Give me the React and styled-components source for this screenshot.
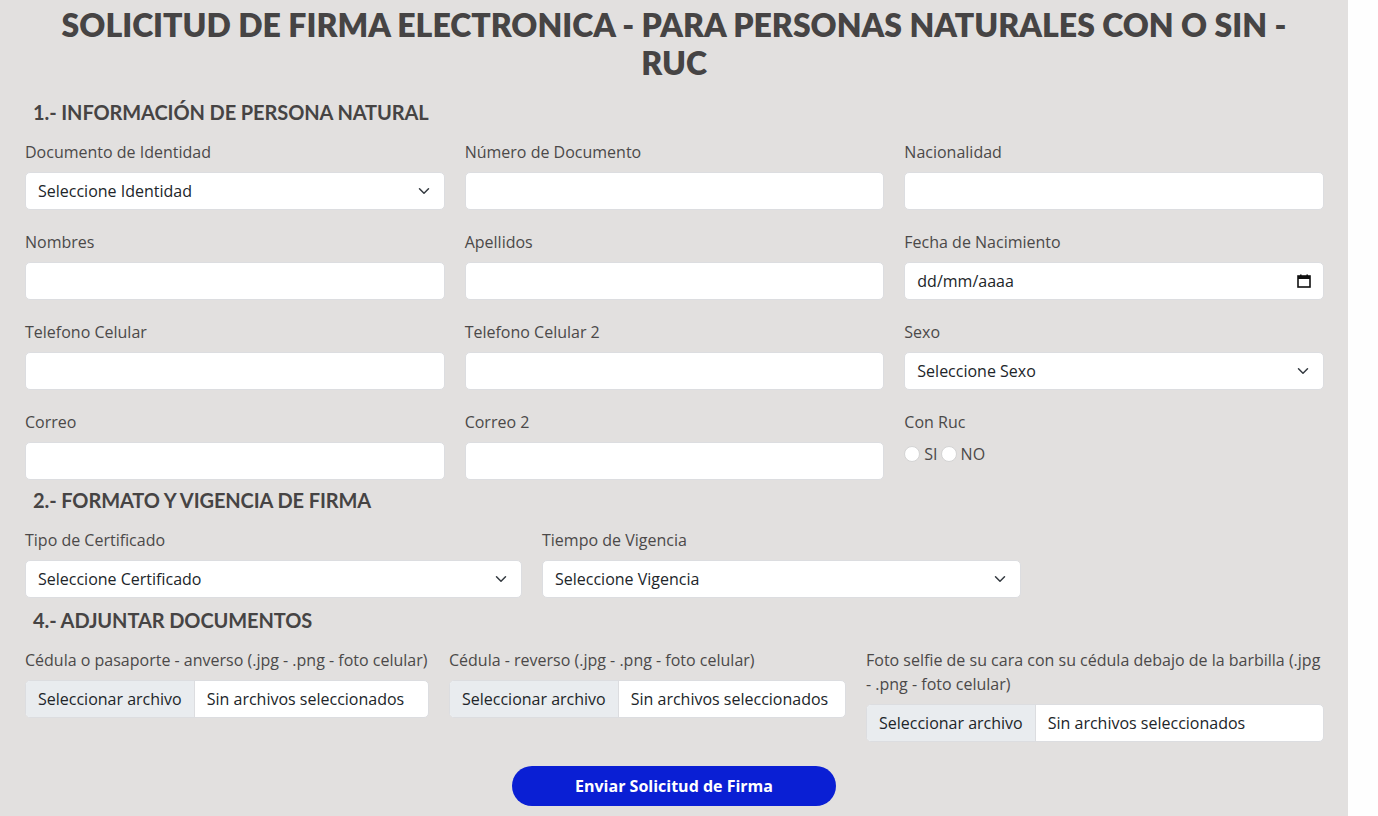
import styled, { createGlobalStyle } from "styled-components";

const GlobalStyle = createGlobalStyle`
  html, body {
    margin: 0;
    padding: 0;
    background: #fefefe;
  }
  body {
    font-family: "Open Sans", "Liberation Sans", sans-serif;
  }
  * { box-sizing: border-box; }
`;

const Panel = styled.div`
  width: 1348px;
  min-height: 816px;
  background: #e2e0df;
  padding-top: 6px;
`;

const Title = styled.h1`
  margin: 0 0 18px;
  text-align: center;
  font-family: "Lato", "Liberation Sans", sans-serif;
  font-weight: 800;
  font-size: 32px;
  line-height: 38px;
  color: #464444;
  letter-spacing: 0;
`;

const SectionTitle = styled.h2`
  margin: 0 0 16px;
  padding-left: 33px;
  font-family: "Lato", "Liberation Sans", sans-serif;
  font-weight: 700;
  font-size: 20px;
  line-height: 24px;
  color: #464444;
  letter-spacing: -0.1px;
`;

const Grid = styled.div`
  display: grid;
  grid-template-columns: ${p => p.cols};
  column-gap: 20px;
  row-gap: 20px;
  padding: 0 24px 0 25px;
  margin-bottom: ${p => p.mb ?? 8}px;
  align-items: start;
`;

const Field = styled.div`
  display: flex;
  flex-direction: column;
  gap: 8px;
`;

const Label = styled.label`
  font-size: 16px;
  line-height: 24px;
  color: #4b4949;
`;

const Input = styled.input`
  height: 38px;
  width: 100%;
  border: 1px solid #dcdde0;
  border-radius: 5px;
  background: #fff;
  padding: 0 12px;
  font-family: "Open Sans", sans-serif;
  font-size: 16px;
  color: #212529;
  outline: none;
`;

const FakeBox = styled.div`
  height: 38px;
  border: 1px solid #dcdde0;
  border-radius: 5px;
  background: #fff;
  padding: 0 12px;
  display: flex;
  align-items: center;
  justify-content: space-between;
  font-size: 16px;
  color: #212529;
`;

const RadioRow = styled.div`
  display: flex;
  align-items: center;
  font-size: 16px;
  line-height: 24px;
  color: #4b4949;
`;

const Radio = styled.input.attrs({ type: "radio" })`
  appearance: none;
  width: 16px;
  height: 16px;
  margin: 0 4px 0 0;
  border: 1px solid #d4d4d4;
  border-radius: 50%;
  background: #fff;
`;

const RadioText = styled.span`
  margin-right: 3px;
`;

const FileBox = styled.div`
  height: 38px;
  display: flex;
  border: 1px solid #dcdde0;
  border-radius: 5px;
  background: #fff;
  overflow: hidden;
  font-size: 16px;
  color: #212529;
`;

const FileButton = styled.span`
  background: #e9ecef;
  border-right: 1px solid #dcdde0;
  padding: 0 12px;
  display: flex;
  align-items: center;
  white-space: nowrap;
`;

const FileText = styled.span`
  padding: 0 12px;
  display: flex;
  align-items: center;
  white-space: nowrap;
`;

const Footer = styled.div`
  display: flex;
  justify-content: center;
  padding-top: 24px;
`;

const Submit = styled.button`
  width: 324px;
  height: 40px;
  border: none;
  border-radius: 20px;
  background: #0a1fd4;
  color: #fff;
  font-family: "Open Sans", sans-serif;
  font-weight: 700;
  font-size: 16px;
`;

const Chevron = () => (
  <svg width="16" height="12" viewBox="0 0 16 16" fill="none">
    <path d="M2 5l6 6 6-6" stroke="#343a40" strokeWidth="2" strokeLinecap="round" strokeLinejoin="round" />
  </svg>
);

const CalendarIcon = () => (
  <svg width="14" height="14" viewBox="0 0 14 14">
    <rect x="1" y="2" width="12" height="11" fill="none" stroke="#111" strokeWidth="1.6" />
    <rect x="1" y="2" width="12" height="3" fill="#111" />
    <rect x="3" y="0.5" width="1.6" height="2" fill="#111" />
    <rect x="9.4" y="0.5" width="1.6" height="2" fill="#111" />
  </svg>
);

const Select = ({ text }) => (
  <FakeBox>
    <span>{text}</span>
    <Chevron />
  </FakeBox>
);

const TextField = ({ label }) => (
  <Field>
    <Label>{label}</Label>
    <Input type="text" />
  </Field>
);

const FileField = ({ label }) => (
  <Field>
    <Label>{label}</Label>
    <FileBox>
      <FileButton>Seleccionar archivo</FileButton>
      <FileText>Sin archivos seleccionados</FileText>
    </FileBox>
  </Field>
);

export default function App() {
  return (
    <>
      <GlobalStyle />
      <Panel>
        <Title>
          SOLICITUD DE FIRMA ELECTRONICA - PARA PERSONAS NATURALES CON O SIN -<br />RUC
        </Title>

        <SectionTitle>1.- INFORMACIÓN DE PERSONA NATURAL</SectionTitle>
        <Grid cols="1fr 1fr 1fr">
          <Field>
            <Label>Documento de Identidad</Label>
            <Select text="Seleccione Identidad" />
          </Field>
          <TextField label="Número de Documento" />
          <TextField label="Nacionalidad" />

          <TextField label="Nombres" />
          <TextField label="Apellidos" />
          <Field>
            <Label>Fecha de Nacimiento</Label>
            <FakeBox>
              <span>dd/mm/aaaa</span>
              <CalendarIcon />
            </FakeBox>
          </Field>

          <TextField label="Telefono Celular" />
          <TextField label="Telefono Celular 2" />
          <Field>
            <Label>Sexo</Label>
            <Select text="Seleccione Sexo" />
          </Field>

          <TextField label="Correo" />
          <TextField label="Correo 2" />
          <Field>
            <Label>Con Ruc</Label>
            <RadioRow>
              <Radio name="ruc" />
              <RadioText>SI</RadioText>
              <Radio name="ruc" />
              <RadioText>NO</RadioText>
            </RadioRow>
          </Field>
        </Grid>

        <SectionTitle>2.- FORMATO Y VIGENCIA DE FIRMA</SectionTitle>
        <Grid cols="497px 479px" mb={10}>
          <Field>
            <Label>Tipo de Certificado</Label>
            <Select text="Seleccione Certificado" />
          </Field>
          <Field>
            <Label>Tiempo de Vigencia</Label>
            <Select text="Seleccione Vigencia" />
          </Field>
        </Grid>

        <SectionTitle>4.- ADJUNTAR DOCUMENTOS</SectionTitle>
        <Grid cols="404px 397px 1fr" mb={0}>
          <FileField label="Cédula o pasaporte - anverso (.jpg - .png - foto celular)" />
          <FileField label="Cédula - reverso (.jpg - .png - foto celular)" />
          <FileField label="Foto selfie de su cara con su cédula debajo de la barbilla (.jpg - .png - foto celular)" />
        </Grid>

        <Footer>
          <Submit>Enviar Solicitud de Firma</Submit>
        </Footer>
      </Panel>
    </>
  );
}
